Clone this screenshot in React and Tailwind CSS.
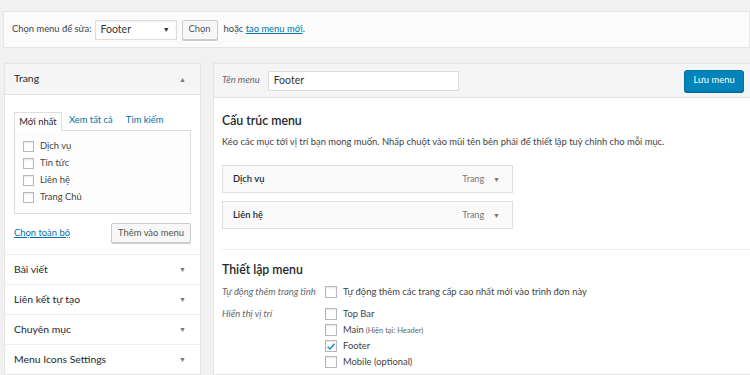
export default function App() {
  const pages = ["Dịch vụ", "Tin tức", "Liên hệ", "Trang Chủ"];
  const sections = ["Bài viết", "Liên kết tự tạo", "Chuyên mục", "Menu Icons Settings"];
  const items = ["Dịch vụ", "Liên hệ"];
  const locations = [
    { label: "Top Bar" },
    { label: "Main", note: "(Hiện tại: Header)" },
    { label: "Footer", checked: true },
    { label: "Mobile (optional)" },
  ];

  return (
    <div
      className="w-[750px] h-[375px] overflow-hidden bg-[#f1f1f1] text-[#444] text-[9.4px]"
      style={{ fontFamily: 'Lato, "Open Sans", sans-serif' }}
    >
      {/* Select menu bar */}
      <div className="mt-[11px] ml-[3px] h-[37px] border border-[#e5e5e5] bg-[#fbfbfb] flex items-center pl-[8px]">
        <span className="text-[#444]">Chọn menu để sửa:</span>
        <div className="ml-[3px] w-[82px] h-[20px] border border-[#ddd] bg-white shadow-[inset_0_1px_2px_rgba(0,0,0,0.07)] flex items-center justify-between pl-[5px] pr-[6px] text-[#32373c] text-[10.5px]">
          <span>Footer</span>
          <span className="text-[7px] text-[#333]">▼</span>
        </div>
        <div className="ml-[5px] h-[20px] w-[36px] justify-center border border-[#ccc] bg-[#f7f7f7] shadow-[0_1px_0_#ccc] rounded-[2px] flex items-center text-[#555]">
          Chọn
        </div>
        <span className="ml-[6px]">
          hoặc <span className="text-[#0073aa] underline">tạo menu mới</span>.
        </span>
      </div>

      <div className="flex mt-[15px]">
        {/* Left column */}
        <div className="ml-[4px] w-[197px] border border-[#e5e5e5] bg-white">
          <div className="h-[31px] bg-[#f5f5f5] border-b border-[#e5e5e5] flex items-center justify-between pl-[9px] pr-[14px]">
            <span className="text-[#23282d] text-[10.4px]">Trang</span>
            <span className="text-[7px] text-[#777]">▲</span>
          </div>
          <div className="px-[9px] pt-[16px] pb-[11px]">
            <div className="flex items-end">
              <div className="border border-[#ddd] border-b-0 bg-white w-[48px] justify-center h-[19px] flex items-center text-[#23282d] relative top-[1px]">
                Mới nhất
              </div>
              <div className="pl-[7px] h-[19px] flex items-center text-[#0073aa]">Xem tất cả</div>
              <div className="pl-[13px] h-[19px] flex items-center text-[#0073aa]">Tìm kiếm</div>
            </div>
            <div className="border border-[#ddd] bg-[#fdfdfd] h-[84px] pl-[8px] pt-[9px] flex flex-col gap-[5px]">
              {pages.map((p) => (
                <div key={p} className="flex items-center h-[12px]">
                  <span className="w-[11px] h-[11px] border border-[#b4b9be] bg-white shadow-[inset_0_1px_2px_rgba(0,0,0,0.1)]" />
                  <span className="ml-[6px]">{p}</span>
                </div>
              ))}
            </div>
            <div className="flex items-center justify-between mt-[9px]">
              <span className="text-[#0073aa] underline">Chọn toàn bộ</span>
              <div className="h-[20px] w-[80px] justify-center border border-[#ccc] bg-[#f7f7f7] shadow-[0_1px_0_#ccc] rounded-[2px] flex items-center text-[#555]">
                Thêm vào menu
              </div>
            </div>
          </div>
          {sections.map((s) => (
            <div
              key={s}
              className="h-[30px] border-t border-[#eee] flex items-center justify-between pl-[9px] pr-[14px]"
            >
              <span className="text-[#23282d] text-[10.4px]">{s}</span>
              <span className="text-[7px] text-[#777]">▼</span>
            </div>
          ))}
        </div>

        {/* Right column */}
        <div className="ml-[12px] flex-1 border border-[#e5e5e5] border-r-0 bg-white">
          <div className="h-[34px] bg-[#f5f5f5] border-b border-[#dfdfdf] flex items-center pl-[8px] pr-[6px]">
            <span className="italic text-[#666]">Tên menu</span>
            <div className="ml-[8px] w-[191px] h-[20px] border border-[#ddd] bg-white flex items-center px-[5px] text-[#32373c] text-[10.5px]">
              Footer
            </div>
            <div className="ml-auto h-[22px] w-[60px] justify-center rounded-[3px] bg-[#0085ba] border border-[#0073aa] shadow-[0_1px_0_#006799] text-white flex items-center">
              Lưu menu
            </div>
          </div>
          <div className="pl-[8px]">
            <div className="mt-[13px] text-[12.3px] text-[#23282d] font-semibold leading-[20px]">Cấu trúc menu</div>
            <div className="mt-[4px] text-[#444] leading-[14px]">
              Kéo các mục tới vị trí bạn mong muốn. Nhấp chuột vào mũi tên bên phải để thiết lập tuỳ chỉnh cho mỗi mục.
            </div>
            <div className="mt-[16px] flex flex-col gap-[8px]">
              {items.map((it) => (
                <div
                  key={it}
                  className="w-[291px] h-[28px] border border-[#dfdfdf] bg-[#fafafa] flex items-center pl-[10px] pr-[12px]"
                >
                  <span className="text-[#23282d] font-semibold">{it}</span>
                  <span className="ml-auto text-[#777] text-[9px]">Trang</span>
                  <span className="ml-[9px] text-[7px] text-[#777]">▼</span>
                </div>
              ))}
            </div>
            <div className="mt-[20px] border-t border-[#eee]" />
            <div className="mt-[10px] text-[12.3px] text-[#23282d] font-semibold leading-[20px]">Thiết lập menu</div>
            <div className="mt-[5px] flex items-center h-[14px]">
              <span className="w-[103px] italic text-[#666]">Tự động thêm trang tĩnh</span>
              <span className="w-[12px] h-[12px] border border-[#b4b9be] bg-white shadow-[inset_0_1px_2px_rgba(0,0,0,0.1)]" />
              <span className="ml-[6px]">Tự động thêm các trang cấp cao nhất mới vào trình đơn này</span>
            </div>
            <div className="mt-[8px] flex">
              <span className="w-[103px] italic text-[#666] leading-[14px]">Hiển thị vị trí</span>
              <div className="flex flex-col gap-[2px]">
                {locations.map((l) => (
                  <div key={l.label} className="flex items-center h-[14px]">
                    <span className="w-[12px] h-[12px] border border-[#b4b9be] bg-white shadow-[inset_0_1px_2px_rgba(0,0,0,0.1)] flex items-center justify-center">
                      {l.checked && (
                        <svg viewBox="0 0 12 12" className="w-[11px] h-[11px]">
                          <path d="M2 6.2 L4.8 9 L10.2 2.8" fill="none" stroke="#1e8cbe" strokeWidth="1.8" />
                        </svg>
                      )}
                    </span>
                    <span className="ml-[6px]">
                      {l.label}
                      {l.note && <span className="text-[7.5px] text-[#666]"> {l.note}</span>}
                    </span>
                  </div>
                ))}
              </div>
            </div>
          </div>
        </div>
      </div>
    </div>
  );
}
